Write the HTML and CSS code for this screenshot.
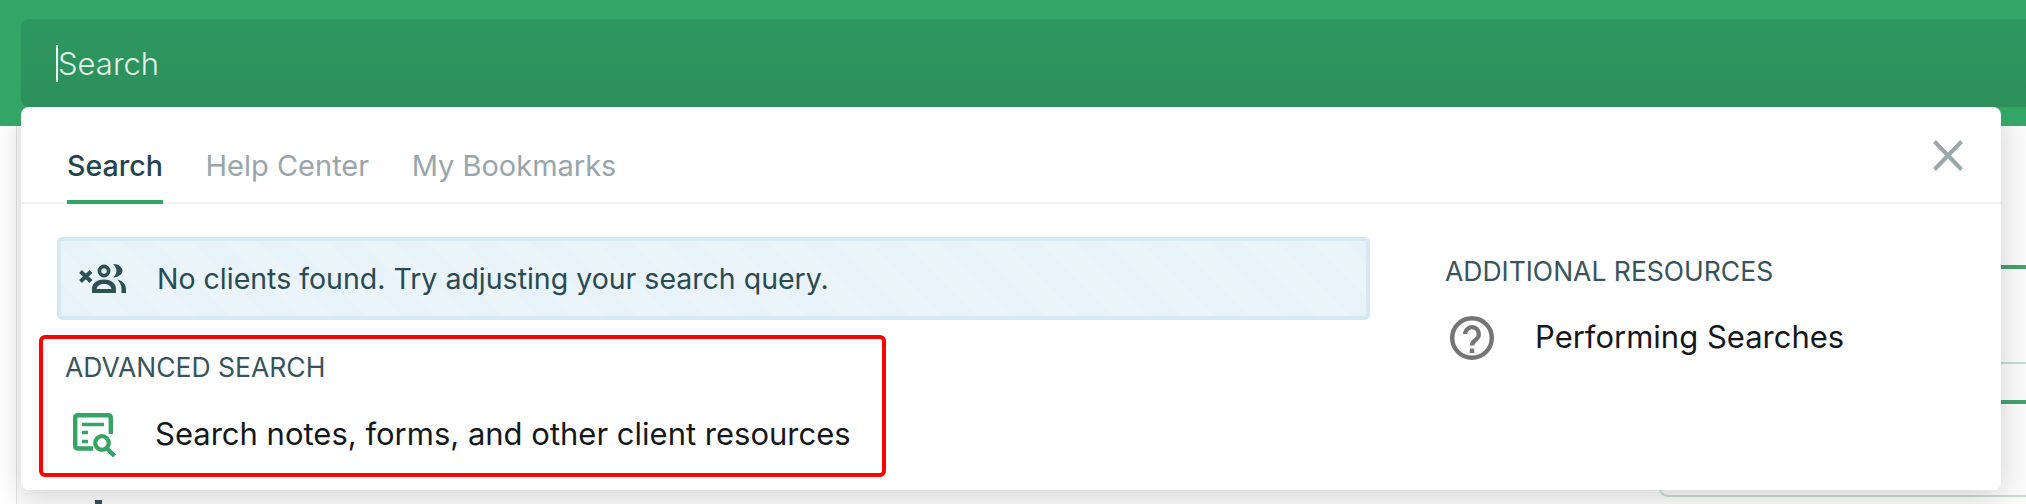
FILE: index.html
```html
<!DOCTYPE html>
<html lang="en">
<head>
<meta charset="utf-8">
<title>Search</title>
<link rel="stylesheet" href="styles.css">
</head>
<body>
<header class="topbar">
  <div class="searchbar"><span class="caret"></span><span class="placeholder">Search</span></div>
</header>
<main class="page">
  <div class="stub"></div>
  <aside class="side">
    <div class="rule rule-one"></div>
    <div class="rule rule-two"></div>
    <div class="rule rule-three"></div>
  </aside>
</main>
<div class="panel-shadow"></div>
<section class="panel">
  <nav class="tabs">
    <a class="tab active">Search</a>
    <a class="tab">Help Center</a>
    <a class="tab">My Bookmarks</a>
    <button class="close" aria-label="Close">
      <svg width="30" height="31" viewBox="0 0 30 31"><path d="M1.5 1.5 28.5 29.5M28.5 1.5 1.5 29.5" fill="none" stroke="#9aa8ac" stroke-width="4"/></svg>
    </button>
  </nav>
  <div class="content">
    <div class="main-col">
      <div class="alert">
        <svg class="icon-people" width="47" height="29" viewBox="0 0 47 29">
          <path d="M1.5 7.5 12 17.5M12 7.5 1.5 17.5" fill="none" stroke="#2f4f57" stroke-width="4"/>
          <circle cx="25" cy="7" r="4.600" fill="none" stroke="#2f4f57" stroke-width="3.600"/>
          <path d="M34 0C40 0 43.500 3.500 43.500 6.800 43.500 10 40 13 34.500 13.500 36.500 10.500 37.500 9 37.500 6.800 37.500 4 36 2.500 34 0Z" fill="#2f4f57"/>
          <path fill-rule="evenodd" d="M13 29V25C13 18.500 19 15.500 25 15.500S37 18.500 37 25V29ZM17.500 25H32.500C32 22 29 20 25 20S18 22 17.500 25Z" fill="#2f4f57"/>
          <path d="M38.500 15.500C43 16.500 47 20 47 25V29H42.500V25C42.500 21 41 19 38.500 15.500Z" fill="#2f4f57"/>
        </svg>
        <span class="alert-text">No clients found. Try adjusting your search query.</span>
      </div>
      <div class="advanced">
        <h3 class="section-title">ADVANCED SEARCH</h3>
        <a class="row row-advanced">
          <svg width="43" height="44" viewBox="0 0 43 44">
            <g fill="none" stroke="#33a565">
              <path d="M20 35.500H4.500A2.500 2.500 0 0 1 2.200 33V4.500A2.500 2.500 0 0 1 4.500 2.200H35.500A2.500 2.500 0 0 1 37.800 4.500V21" stroke-width="4.400"/>
              <path d="M9 11.500H31M9 19.500H15M9 28.500H15" stroke-width="3.600"/>
              <circle cx="29" cy="30" r="6.800" stroke-width="4.200"/>
              <path d="M33.500 35 41.500 43" stroke-width="4.400"/>
            </g>
          </svg>
          <span class="row-text">Search notes, forms, and other client resources</span>
        </a>
        <div class="highlight"></div>
      </div>
    </div>
    <div class="resources">
      <h3 class="section-title">ADDITIONAL RESOURCES</h3>
      <a class="row row-help">
        <svg width="44" height="44" viewBox="0 0 44 44">
          <circle cx="22" cy="22" r="19.800" fill="none" stroke="#757575" stroke-width="4.400"/>
          <path d="M15.200 18A6.800 6.800 0 1 1 26 23.500C23.500 25.300 22 26.500 22 29.500" fill="none" stroke="#757575" stroke-width="4.200"/>
          <path d="M19.800 32.500H24.200V37H19.800Z" fill="#757575"/>
        </svg>
        <span class="row-text">Performing Searches</span>
      </a>
    </div>
  </div>
</section>
</body>
</html>
```
FILE: styles.css
```css
* { box-sizing: border-box; }
html, body { margin: 0; height: 504px; overflow: hidden; }
body {
  position: relative;
  background: #fff;
  font-family: "Inter", "Liberation Sans", sans-serif;
  color: #1f2326;
}
.topbar {
  position: relative;
  z-index: 2;
  height: 126px;
  padding: 19px 0 0 21px;
  background: #33a565;
}
.searchbar {
  display: flex;
  align-items: center;
  height: 88px;
  padding-left: 35px;
  border-radius: 8px 0 0 8px;
  background: linear-gradient(#2e9861, #2c8f5b);
}
.caret { width: 2px; height: 37px; background: #f2faf5; }
.placeholder {
  font-size: 31px;
  font-weight: 300;
  color: #e2f2e9;
}
.page {
  display: flex;
  height: 378px;
  margin-left: 16px;
  border-left: 1px solid #e4e4e4;
  background: #fbfbfb;
}
.stub {
  width: 7px;
  height: 4px;
  margin: 374px 0 0 78px;
  background: #33515a;
}
.side {
  width: 367px;
  height: 371px;
  margin-left: auto;
  border-left: 2px solid #c5ded0;
  border-bottom: 2px solid #c5ded0;
  border-bottom-left-radius: 9px;
}
.rule { height: 4px; background: #45a26d; }
.rule-one { margin-top: 139px; }
.rule-two { height: 2px; margin-top: 93px; background: #c5ded0; }
.rule-three { margin-top: 36px; }
.panel-shadow,
.panel {
  position: absolute;
  top: 107px;
  left: 21px;
  width: 1980px;
  height: 383px;
  border-radius: 8px;
}
.panel-shadow {
  z-index: 1;
  box-shadow: 0 6px 30px rgba(0, 0, 0, .17);
}
.panel {
  z-index: 3;
  background: #fff;
}
.tabs {
  display: flex;
  align-items: flex-end;
  gap: 42.500px;
  height: 97px;
  padding-left: 46px;
  border-bottom: 2px solid #f0f2f2;
}
.tab {
  margin-bottom: -2px;
  padding-bottom: 17px;
  border-bottom: 4px solid transparent;
  font-size: 29px;
  line-height: 34px;
  color: #98a6ab;
}
.tab.active {
  border-bottom-color: #33a565;
  font-size: 28.600px;
  font-weight: 500;
  color: #24444d;
}
.close {
  align-self: flex-start;
  display: block;
  margin: 33px 38px 0 auto;
  padding: 0;
  border: 0;
  background: none;
  line-height: 0;
}
.content {
  display: flex;
  padding: 33px 0 0 36px;
}
.main-col { width: 1313px; }
.alert {
  display: flex;
  align-items: center;
  height: 83px;
  padding-left: 18px;
  border: 4px solid #d4e9f2;
  border-radius: 5px;
  background: repeating-linear-gradient(45deg, #e7f3f8 0 24px, #ebf5f9 24px 48px);
}
.alert-text {
  margin-left: 31px;
  font-size: 28.500px;
  color: #2a4a52;
}
.advanced { position: relative; padding-top: 32px; }
.section-title {
  margin: 0;
  font-size: 26.500px;
  font-weight: 400;
  line-height: 30px;
  color: #37545c;
}
.advanced .section-title { margin-left: 8px; }
.row {
  display: flex;
  align-items: center;
  height: 60px;
}
.row-text { padding-bottom: 3px; font-size: 31px; color: #15181a; }
.row-advanced { margin: 23px 0 0 16px; gap: 39px; }
.highlight {
  position: absolute;
  top: 15px;
  left: -18px;
  width: 847px;
  height: 142px;
  border: 4px solid #ff0000;
  border-radius: 6px;
}
.resources { margin-left: 75px; padding-top: 19px; }
.row-help { margin: 22px 0 0 5px; gap: 41px; }
```
